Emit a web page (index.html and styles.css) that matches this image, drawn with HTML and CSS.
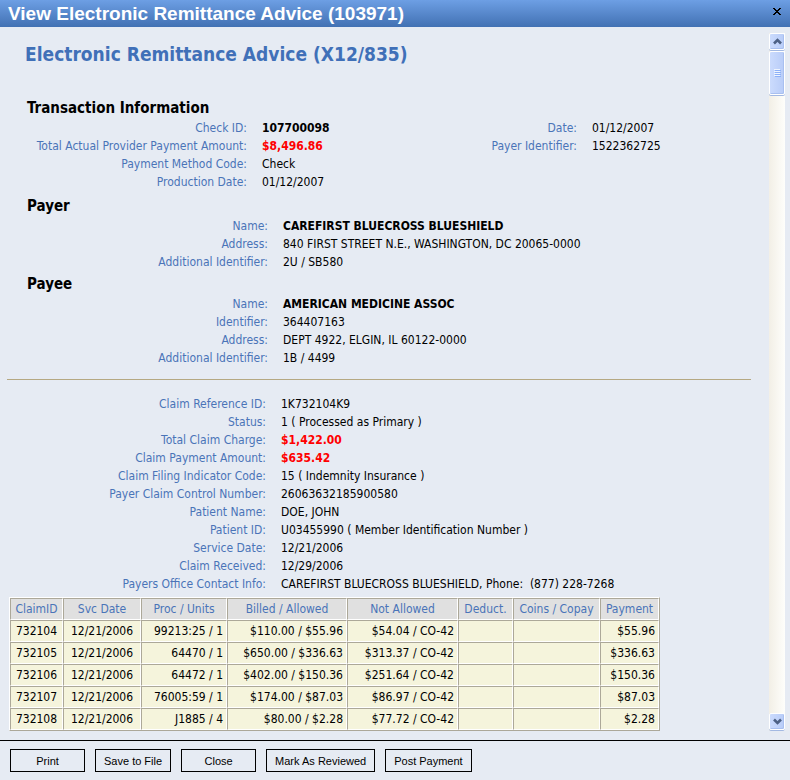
FILE: index.html
```html
<!DOCTYPE html>
<html lang="en">
<head>
<meta charset="utf-8">
<title>View Electronic Remittance Advice (103971)</title>
<link rel="stylesheet" href="styles.css">
</head>
<body>
<header class="titlebar">
  <h1 class="titlebar-text">View Electronic Remittance Advice (103971)</h1>
  <button class="titlebar-close" type="button" aria-label="Close window">
    <svg width="8" height="7" viewBox="0 0 8 7" shape-rendering="crispEdges"><path d="M0 0h2v1h1v1h2v-1h1v-1h2v1h-1v1h-1v1h-1v1h1v1h1v1h1v1h-2v-1h-1v-1h-2v1h-1v1h-2v-1h1v-1h1v-1h1v-1h-1v-1h-1v-1h-1z" fill="#000"/></svg>
  </button>
</header>
<div class="body">
  <main class="pane">
    <h2 class="page-title">Electronic Remittance Advice (X12/835)</h2>

    <section class="section">
      <h3 class="section-title">Transaction Information</h3>
      <div class="columns">
        <dl class="fields fields-transaction">
          <dt>Check ID:</dt><dd class="strong">107700098</dd>
          <dt>Total Actual Provider Payment Amount:</dt><dd class="amount">$8,496.86</dd>
          <dt>Payment Method Code:</dt><dd>Check</dd>
          <dt>Production Date:</dt><dd>01/12/2007</dd>
        </dl>
        <dl class="fields fields-side">
          <dt>Date:</dt><dd>01/12/2007</dd>
          <dt>Payer Identifier:</dt><dd>1522362725</dd>
        </dl>
      </div>
    </section>

    <section class="section">
      <h3 class="section-title">Payer</h3>
      <dl class="fields fields-party">
        <dt>Name:</dt><dd class="strong">CAREFIRST BLUECROSS BLUESHIELD</dd>
        <dt>Address:</dt><dd>840 FIRST STREET N.E., WASHINGTON, DC 20065-0000</dd>
        <dt>Additional Identifier:</dt><dd>2U / SB580</dd>
      </dl>
    </section>

    <section class="section">
      <h3 class="section-title">Payee</h3>
      <dl class="fields fields-party">
        <dt>Name:</dt><dd class="strong">AMERICAN MEDICINE ASSOC</dd>
        <dt>Identifier:</dt><dd>364407163</dd>
        <dt>Address:</dt><dd>DEPT 4922, ELGIN, IL 60122-0000</dd>
        <dt>Additional Identifier:</dt><dd>1B / 4499</dd>
      </dl>
    </section>

    <hr class="rule">

    <section>
      <dl class="fields fields-claim">
        <dt>Claim Reference ID:</dt><dd>1K732104K9</dd>
        <dt>Status:</dt><dd>1 ( Processed as Primary )</dd>
        <dt>Total Claim Charge:</dt><dd class="amount">$1,422.00</dd>
        <dt>Claim Payment Amount:</dt><dd class="amount">$635.42</dd>
        <dt>Claim Filing Indicator Code:</dt><dd>15 ( Indemnity Insurance )</dd>
        <dt>Payer Claim Control Number:</dt><dd>26063632185900580</dd>
        <dt>Patient Name:</dt><dd>DOE, JOHN</dd>
        <dt>Patient ID:</dt><dd>U03455990 ( Member Identification Number )</dd>
        <dt>Service Date:</dt><dd>12/21/2006</dd>
        <dt>Claim Received:</dt><dd>12/29/2006</dd>
        <dt>Payers Office Contact Info:</dt><dd>CAREFIRST BLUECROSS BLUESHIELD, Phone:&nbsp; (877) 228-7268</dd>
      </dl>

      <table class="lines">
        <colgroup>
          <col class="col-claim"><col class="col-date"><col class="col-proc"><col class="col-billed">
          <col class="col-not"><col class="col-deduct"><col class="col-coins"><col class="col-pay">
        </colgroup>
        <thead>
          <tr><th>ClaimID</th><th>Svc Date</th><th>Proc / Units</th><th>Billed / Allowed</th><th>Not Allowed</th><th>Deduct.</th><th>Coins / Copay</th><th>Payment</th></tr>
        </thead>
        <tbody>
          <tr><td>732104</td><td>12/21/2006</td><td>99213:25 / 1</td><td>$110.00 / $55.96</td><td>$54.04 / CO-42</td><td></td><td></td><td>$55.96</td></tr>
          <tr><td>732105</td><td>12/21/2006</td><td>64470 / 1</td><td>$650.00 / $336.63</td><td>$313.37 / CO-42</td><td></td><td></td><td>$336.63</td></tr>
          <tr><td>732106</td><td>12/21/2006</td><td>64472 / 1</td><td>$402.00 / $150.36</td><td>$251.64 / CO-42</td><td></td><td></td><td>$150.36</td></tr>
          <tr><td>732107</td><td>12/21/2006</td><td>76005:59 / 1</td><td>$174.00 / $87.03</td><td>$86.97 / CO-42</td><td></td><td></td><td>$87.03</td></tr>
          <tr><td>732108</td><td>12/21/2006</td><td>J1885 / 4</td><td>$80.00 / $2.28</td><td>$77.72 / CO-42</td><td></td><td></td><td>$2.28</td></tr>
        </tbody>
      </table>
    </section>
  </main>
  <div class="scrollbar">
    <button class="scroll-button" type="button" aria-label="Scroll up">
      <svg width="9" height="7" viewBox="0 0 9 7"><path d="M1 5.500L4.500 2L8 5.500" fill="none" stroke="#4d6185" stroke-width="2.600"/></svg>
    </button>
    <div class="scroll-thumb">
      <svg width="7" height="8" viewBox="0 0 7 8" shape-rendering="crispEdges"><path d="M0 .5h6M0 2.500h6M0 4.500h6M0 6.500h6" stroke="#eef4fe"/><path d="M1 1.500h6M1 3.500h6M1 5.500h6M1 7.500h6" stroke="#8cb0f8"/></svg>
    </div>
    <button class="scroll-button scroll-down" type="button" aria-label="Scroll down">
      <svg width="9" height="7" viewBox="0 0 9 7"><path d="M1 1.500L4.500 5L8 1.500" fill="none" stroke="#4d6185" stroke-width="2.600"/></svg>
    </button>
  </div>
</div>
<footer class="actions">
  <button class="action" type="button">Print</button>
  <button class="action" type="button">Save to File</button>
  <button class="action" type="button">Close</button>
  <button class="action" type="button">Mark As Reviewed</button>
  <button class="action" type="button">Post Payment</button>
</footer>
</body>
</html>
```
FILE: styles.css
```css
* {
  box-sizing: border-box;
}

body {
  margin: 0;
  height: 100vh;
  display: flex;
  flex-direction: column;
  background: #e6ebf3;
  color: #000;
  font: 12px/18px "DejaVu Sans Condensed", Tahoma, "DejaVu Sans", sans-serif;
}

h1,
h2,
h3,
dl,
dd {
  margin: 0;
}

.titlebar {
  flex: none;
  display: flex;
  align-items: center;
  justify-content: space-between;
  height: 27px;
  padding: 0 8px;
  background: linear-gradient(#6d9fe4, #4271b3);
}

.titlebar-text {
  color: #fff;
  font: bold 19px/26px "Liberation Sans", Arial, sans-serif;
}

.titlebar-close {
  display: flex;
  padding: 0 1px 4px;
  border: 0;
  background: none;
}

.body {
  flex: 1;
  display: flex;
  justify-content: space-between;
  min-height: 0;
  padding-right: 5px;
}

.pane {
  flex: 1;
  min-width: 0;
  overflow: hidden;
  padding: 14px 18px 0 7px;
}

.page-title {
  margin: 0 0 29px 18px;
  color: #4070b8;
  font-size: 19px;
  line-height: 26px;
}

.section {
  padding: 1px 0;
}

.section-title {
  margin-left: 20px;
  font-size: 15px;
  line-height: 22px;
}

.columns {
  display: flex;
  padding-bottom: 2px;
}

.fields {
  display: grid;
  grid-auto-rows: 18px;
  column-gap: 15px;
  align-content: start;
  white-space: nowrap;
}

.fields dt {
  color: #4a74b8;
  text-align: right;
}

.fields-transaction {
  grid-template-columns: 240px 200px;
}

.fields-side {
  grid-template-columns: 115px auto;
}

.fields-party {
  grid-template-columns: 261px 1fr;
}

.fields-claim {
  grid-template-columns: 259px 1fr;
}

.strong {
  font-weight: bold;
}

.amount {
  color: #f00;
  font-weight: bold;
}

.rule {
  height: 1px;
  margin: 11px 0 15px;
  border: 0;
  background: #b5a882;
}

.lines {
  table-layout: fixed;
  width: 651px;
  margin: 4px 0 0 2px;
  border: 1px solid;
  border-color: #fff #aca899 #aca899 #fff;
  border-spacing: 0;
  white-space: nowrap;
}

.lines th,
.lines td {
  height: 22px;
  padding: 0 3px;
  border: 1px solid;
  border-color: #aca899 #fff #fff #aca899;
  background: #f5f4dc;
  line-height: 20px;
  text-align: right;
}

.lines th {
  padding: 0;
  background: #e0e0e0;
  color: #4a74b8;
  font-weight: normal;
  text-align: center;
}

.lines td:nth-child(-n+2) {
  padding: 0;
  text-align: center;
}

.col-claim { width: 53px; }
.col-date { width: 78px; }
.col-proc { width: 86px; }
.col-billed { width: 120px; }
.col-not { width: 111px; }
.col-deduct { width: 55px; }
.col-coins { width: 87px; }
.col-pay { width: 59px; }

.scrollbar {
  flex: none;
  display: flex;
  flex-direction: column;
  width: 16px;
  margin: 6px 0 9px;
  background: linear-gradient(to right, #f2efe6, #fefefb);
}

.scroll-button,
.scroll-thumb {
  flex: none;
  display: flex;
  align-items: center;
  justify-content: center;
  height: 17px;
  padding: 0;
  border: 1px solid #fff;
  border-radius: 2px;
  background: linear-gradient(to right, #cbdbfd, #b8ccf8);
  box-shadow: inset -1px -1px #a9c0f0, 0 1px #a3b9e2;
}

.scroll-thumb {
  height: 44px;
  margin-top: 1px;
}

.scroll-down {
  margin-top: auto;
  margin-bottom: 1px;
}

.actions {
  flex: none;
  display: flex;
  gap: 10px;
  padding: 8px 10px;
  border-top: 1px solid #000;
}

.action {
  min-width: 75px;
  height: 23px;
  padding: 0 8px;
  border: 1px solid #000;
  background: #e6ebf3;
  color: #000;
  font: 11px/20px "Liberation Sans", Arial, sans-serif;
}
```
